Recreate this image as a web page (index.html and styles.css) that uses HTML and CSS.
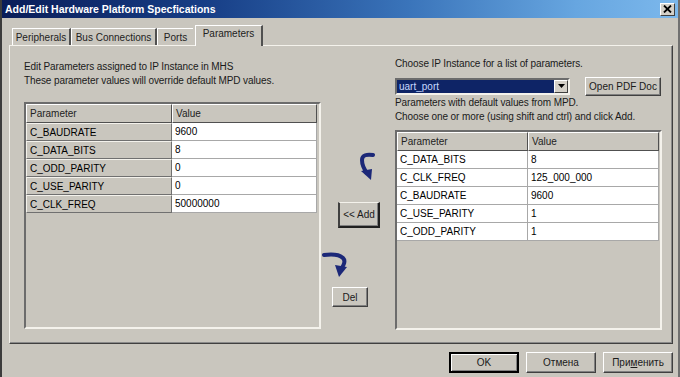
FILE: index.html
```html
<!DOCTYPE html>
<html>
    <head>
        <title>Add/Edit Hardware Platform Specfications</title>
        <link rel="stylesheet" href="styles.css">
    </head>
    <body>
        <div class="window">

            <div class="titlebar">
                <span class="title">Add/Edit Hardware Platform Specfications</span>
                <span class="close">
                    <svg width="9" height="8" viewBox="0 0 9 8"><path d="M1 0.5 L8 7.5 M8 0.5 L1 7.5" stroke="#000" stroke-width="1.8"/></svg>
                </span>
            </div>

            <div class="tabs">
                <span class="tab tab-periph">Peripherals</span>
                <span class="tab tab-bus">Bus Connections</span>
                <span class="tab tab-ports">Ports</span>
                <span class="tab tab-active">Parameters</span>
            </div>

            <div class="panel">

                <div class="col-left">
                    <p class="note">Edit Parameters assigned to IP Instance in MHS</p>
                    <p class="note">These parameter values will override default MPD values.</p>
                    <div class="frame frame-left">
                        <table class="grid">
                            <colgroup><col class="c-name-l"><col class="c-val-l"></colgroup>
                            <tr><th>Parameter</th><th>Value</th></tr>
                            <tr><td class="name">C_BAUDRATE</td><td class="val">9600</td></tr>
                            <tr><td class="name">C_DATA_BITS</td><td class="val">8</td></tr>
                            <tr><td class="name">C_ODD_PARITY</td><td class="val">0</td></tr>
                            <tr><td class="name">C_USE_PARITY</td><td class="val">0</td></tr>
                            <tr><td class="name">C_CLK_FREQ</td><td class="val">50000000</td></tr>
                        </table>
                    </div>
                </div>

                <div class="col-mid">
                    <!-- arrow into the left list -->
                    <svg class="arrow-add" width="18" height="30" viewBox="0 0 18 30">
                        <path d="M16 3 C10 2 5 3 5 8 C5 13 7 17 10 21" fill="none" stroke="#1c2878" stroke-width="4" stroke-linecap="round"/>
                        <path d="M4 19 L15 17 L14 28 Z" fill="#1c2878"/>
                    </svg>
                    <button class="btn btn-add">&lt;&lt; Add</button>
                    <svg class="arrow-del" width="28" height="27" viewBox="0 0 28 27">
                        <path d="M2 4 C10 3 18 4 21 7 C24 10 22 14 19 18" fill="none" stroke="#1c2878" stroke-width="4" stroke-linecap="round"/>
                        <path d="M13 14 L25 16 L17 26 Z" fill="#1c2878"/>
                    </svg>
                    <button class="btn btn-del">Del</button>
                </div>

                <div class="col-right">
                    <p class="note">Choose IP Instance for a list of parameters.</p>
                    <div class="combo-row">
                        <div class="combo">
                            <span class="combo-text">uart_port</span>
                            <span class="combo-drop">
                                <svg width="7" height="4" viewBox="0 0 7 4"><path d="M0 0 H7 L3.5 4 Z" fill="#000"/></svg>
                            </span>
                        </div>
                        <button class="btn btn-pdf">Open PDF Doc</button>
                    </div>
                    <p class="note">Parameters with default values from MPD.</p>
                    <p class="note">Choose one or more (using shift and ctrl) and click Add.</p>
                    <div class="frame frame-right">
                        <table class="grid">
                            <colgroup><col class="c-name-r"><col class="c-val-r"></colgroup>
                            <tr><th>Parameter</th><th>Value</th></tr>
                            <tr><td class="val">C_DATA_BITS</td><td class="val">8</td></tr>
                            <tr><td class="val">C_CLK_FREQ</td><td class="val">125_000_000</td></tr>
                            <tr><td class="val">C_BAUDRATE</td><td class="val">9600</td></tr>
                            <tr><td class="val">C_USE_PARITY</td><td class="val">1</td></tr>
                            <tr><td class="val">C_ODD_PARITY</td><td class="val">1</td></tr>
                        </table>
                    </div>
                </div>

            </div>

            <div class="footer">
                <button class="btn btn-ok">OK</button>
                <button class="btn btn-cancel">Отмена</button>
                <button class="btn btn-apply">При<u>м</u>енить</button>
            </div>

        </div>
    </body>
</html>
```

FILE: styles.css
```css
body {
    margin: 0;
    background-color: #c9c6be;
    font-family: "Liberation Sans", Arial, sans-serif;
    font-size: 10px;
    color: #000;
}

.window {
    width: 680px;
    height: 377px;
    box-sizing: border-box;
    border-left: 2px solid #3c3c3c;
    border-right: 2px solid #707070;
    overflow: hidden;
}

/* Title bar */
.titlebar {
    height: 18px;
    display: flex;
    align-items: center;
    justify-content: space-between;
    padding: 0 3px 0 3px;
    background: linear-gradient(90deg, #0a1d58 0%, #173e86 30%, #3a74ba 60%, #67a6e0 85%, #7cb8ec 100%);
}

.title {
    color: #fff;
    font-weight: bold;
    font-size: 10.5px;
}

.close {
    width: 15px;
    height: 13px;
    box-sizing: border-box;
    background-color: #d4d0c8;
    border: 1px solid;
    border-color: #fff #404040 #404040 #fff;
    display: flex;
    align-items: center;
    justify-content: center;
}

/* Tabs */
.tabs {
    display: flex;
    align-items: flex-end;
    height: 27px;
    padding-left: 10px;
}

.tab {
    height: 17px;
    box-sizing: border-box;
    border-top: 1px solid #fff;
    border-left: 1px solid #fff;
    border-right: 2px solid #505050;
    display: flex;
    align-items: center;
    justify-content: center;
    color: #222;
}

.tab-periph { width: 59px; }
.tab-bus { width: 86px; }
.tab-ports { width: 36px; border-right: none; }

.tab-active {
    width: 68px;
    height: 21px;
    margin-left: 2px;
    margin-bottom: -1px;
    background-color: #c9c6be;
    padding-bottom: 5px;
}

/* Tab page */
.panel {
    margin-left: 7px;
    width: 664px;
    height: 299px;
    box-sizing: border-box;
    border: 1px solid;
    border-color: #f4f2ec #404040 #404040 #f4f2ec;
    box-shadow: inset -1px -1px #8a8a8a;
    display: flex;
    padding-left: 14px;
}

.note {
    margin: 0;
    height: 14px;
    line-height: 14px;
    white-space: nowrap;
    letter-spacing: -0.1px;
    color: #1a1a1a;
}

.col-left {
    width: 297px;
    padding-top: 14px;
}

.col-mid {
    width: 74px;
    display: flex;
    flex-direction: column;
    align-items: flex-start;
}

.col-right {
    width: 267px;
    padding-top: 11px;
}

/* Sunken list frames */
.frame {
    box-sizing: border-box;
    border: 2px solid;
    border-color: #6c6c6c #f4f2ec #f4f2ec #6c6c6c;
    background-color: #c9c6be;
}

.frame-left {
    margin-top: 14px;
    height: 227px;
}

.frame-right {
    margin-top: 6px;
    height: 200px;
}

.grid {
    border-collapse: separate;
    border-spacing: 0;
    table-layout: fixed;
}

.c-name-l { width: 146px; }
.c-val-l { width: 145px; }
.c-name-r { width: 131px; }
.c-val-r { width: 131px; }

.grid th {
    height: 19px;
    box-sizing: border-box;
    text-align: left;
    font-weight: normal;
    padding: 0 0 0 3px;
    border-top: 1px solid #fff;
    border-left: 1px solid #fff;
    border-right: 1px solid #505050;
    border-bottom: 1px solid #505050;
    color: #222;
}

.grid td {
    height: 18px;
    box-sizing: border-box;
    padding: 0 0 0 3px;
    border-right: 1px solid #a8a8a8;
    border-bottom: 1px solid #a8a8a8;
    white-space: nowrap;
}

.grid td.name {
    background-color: #c9c6be;
    border-top: 1px solid #f4f2ec;
    border-left: 1px solid #f4f2ec;
    border-right: 1px solid #707070;
    border-bottom: 1px solid #707070;
}

.grid td.val {
    background-color: #fff;
}

/* Buttons */
.btn {
    box-sizing: border-box;
    background-color: #c9c6be;
    border: 1px solid;
    border-color: #fff #404040 #404040 #fff;
    box-shadow: inset -1px -1px #808080;
    font-family: "Liberation Sans", Arial, sans-serif;
    font-size: 10px;
    color: #1a1a1a;
    padding: 0;
}

.btn-add {
    width: 42px;
    height: 26px;
    margin-left: 17px;
    margin-top: 20px;
    border-color: #f4f2ec #202020 #202020 #404040;
    border-width: 1px 2px 2px 2px;
}

.btn-del {
    width: 36px;
    height: 20px;
    margin-left: 11px;
    margin-top: 9px;
}

.arrow-add {
    margin-left: 36px;
    margin-top: 106px;
}

.arrow-del {
    margin-left: 1px;
    margin-top: 23px;
}

/* Instance chooser */
.combo-row {
    display: flex;
    align-items: center;
    margin-top: 5px;
    height: 20px;
}

.combo {
    width: 175px;
    height: 17px;
    box-sizing: border-box;
    border: 2px solid;
    border-color: #6c6c6c #f4f2ec #f4f2ec #6c6c6c;
    background-color: #fff;
    display: flex;
}

.combo-text {
    flex: 1;
    background-color: #0e2466;
    color: #c8d8ff;
    padding-left: 2px;
    line-height: 13px;
}

.combo-drop {
    width: 14px;
    box-sizing: border-box;
    background-color: #d4d0c8;
    border: 1px solid;
    border-color: #fff #404040 #404040 #fff;
    display: flex;
    align-items: center;
    justify-content: center;
}

.btn-pdf {
    width: 76px;
    height: 19px;
    margin-left: 15px;
}

/* Dialog buttons */
.footer {
    display: flex;
    justify-content: flex-end;
    gap: 7px;
    padding-right: 5px;
    margin-top: 8px;
}

.footer .btn {
    width: 70px;
    height: 21px;
}

.btn-ok {
    border-width: 2px;
    border-color: #000;
    box-shadow: inset 1px 1px #fff, inset -1px -1px #808080;
}
```
